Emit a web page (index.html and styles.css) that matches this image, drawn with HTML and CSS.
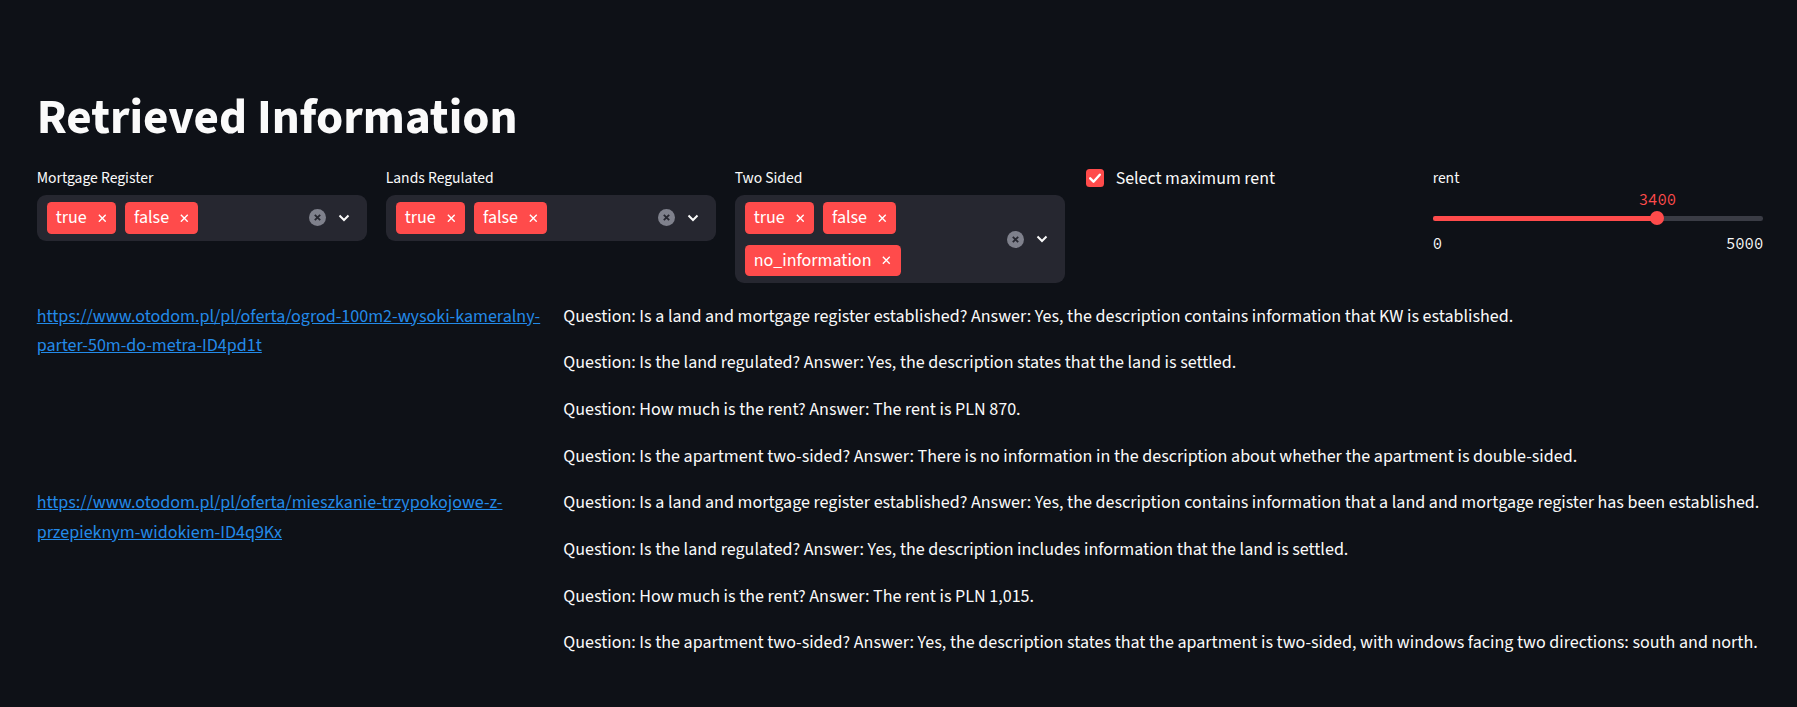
FILE: index.html
```html
<!DOCTYPE html>
<html lang="en">
<head>
<meta charset="utf-8">
<title>Retrieved Information</title>
<link rel="stylesheet" href="styles.css">
</head>
<body>
<div class="app">
  <h1 class="title">Retrieved Information</h1>

  <div class="filters">
    <div class="field">
      <label class="field-label">Mortgage Register</label>
      <div class="multiselect">
        <div class="tags">
          <span class="tag">true<svg class="tag-x" viewBox="0 0 10 10"><path d="M1 1l8 8M9 1l-8 8"/></svg></span>
          <span class="tag">false<svg class="tag-x" viewBox="0 0 10 10"><path d="M1 1l8 8M9 1l-8 8"/></svg></span>
        </div>
        <div class="ms-icons">
          <svg class="clear-icon" viewBox="0 0 24 24"><circle cx="12" cy="12" r="12"/><path d="M8.2 8.2l7.6 7.6M15.8 8.2l-7.6 7.6"/></svg>
          <svg class="chevron" viewBox="0 0 12 8"><path d="M1.5 1.5L6 6l4.5-4.5"/></svg>
        </div>
      </div>
    </div>

    <div class="field">
      <label class="field-label">Lands Regulated</label>
      <div class="multiselect">
        <div class="tags">
          <span class="tag">true<svg class="tag-x" viewBox="0 0 10 10"><path d="M1 1l8 8M9 1l-8 8"/></svg></span>
          <span class="tag">false<svg class="tag-x" viewBox="0 0 10 10"><path d="M1 1l8 8M9 1l-8 8"/></svg></span>
        </div>
        <div class="ms-icons">
          <svg class="clear-icon" viewBox="0 0 24 24"><circle cx="12" cy="12" r="12"/><path d="M8.2 8.2l7.6 7.6M15.8 8.2l-7.6 7.6"/></svg>
          <svg class="chevron" viewBox="0 0 12 8"><path d="M1.5 1.5L6 6l4.5-4.5"/></svg>
        </div>
      </div>
    </div>

    <div class="field">
      <label class="field-label">Two Sided</label>
      <div class="multiselect">
        <div class="tags">
          <span class="tag">true<svg class="tag-x" viewBox="0 0 10 10"><path d="M1 1l8 8M9 1l-8 8"/></svg></span>
          <span class="tag">false<svg class="tag-x" viewBox="0 0 10 10"><path d="M1 1l8 8M9 1l-8 8"/></svg></span>
          <span class="tag">no_information<svg class="tag-x" viewBox="0 0 10 10"><path d="M1 1l8 8M9 1l-8 8"/></svg></span>
        </div>
        <div class="ms-icons">
          <svg class="clear-icon" viewBox="0 0 24 24"><circle cx="12" cy="12" r="12"/><path d="M8.2 8.2l7.6 7.6M15.8 8.2l-7.6 7.6"/></svg>
          <svg class="chevron" viewBox="0 0 12 8"><path d="M1.5 1.5L6 6l4.5-4.5"/></svg>
        </div>
      </div>
    </div>

    <div class="field checkbox-field">
      <span class="checkbox"><svg viewBox="0 0 18 18"><path d="M4.2 9.3l3.3 3.4 6.3-7"/></svg></span>
      <span class="checkbox-label">Select maximum rent</span>
    </div>

    <div class="field">
      <label class="field-label field-label-tight">rent</label>
      <div class="slider">
        <div class="slider-top"><span class="slider-value" style="left:68%">3400</span></div>
        <div class="slider-track">
          <div class="slider-rail"><div class="slider-fill" style="width:68%"></div></div>
          <span class="slider-thumb" style="left:68%"></span>
        </div>
        <div class="slider-ticks"><span>0</span><span>5000</span></div>
      </div>
    </div>
  </div>

  <div class="results">
    <div class="result-row">
      <div class="result-link"><a href="#">https://www.otodom.pl/pl/oferta/ogrod-100m2-wysoki-kameralny-parter-50m-do-metra-ID4pd1t</a></div>
      <div class="result-qa">
        <p>Question: Is a land and mortgage register established? Answer: Yes, the description contains information that KW is established.</p>
        <p>Question: Is the land regulated? Answer: Yes, the description states that the land is settled.</p>
        <p>Question: How much is the rent? Answer: The rent is PLN 870.</p>
        <p>Question: Is the apartment two-sided? Answer: There is no information in the description about whether the apartment is double-sided.</p>
      </div>
    </div>
    <div class="result-row">
      <div class="result-link"><a href="#">https://www.otodom.pl/pl/oferta/mieszkanie-trzypokojowe-z-przepieknym-widokiem-ID4q9Kx</a></div>
      <div class="result-qa">
        <p>Question: Is a land and mortgage register established? Answer: Yes, the description contains information that a land and mortgage register has been established.</p>
        <p>Question: Is the land regulated? Answer: Yes, the description includes information that the land is settled.</p>
        <p>Question: How much is the rent? Answer: The rent is PLN 1,015.</p>
        <p>Question: Is the apartment two-sided? Answer: Yes, the description states that the apartment is two-sided, with windows facing two directions: south and north.</p>
      </div>
    </div>
  </div>
</div>
</body>
</html>
```
FILE: styles.css
```css
html, body {
  margin: 0;
  background: #0e1117;
  color: #fafafa;
  font-family: "Source Sans 3", "Source Sans Pro", "Lato", sans-serif;
}

.app {
  padding: 89px 33.7px 0 36.7px;
}

.title {
  margin: 0;
  font-size: 49.1px;
  line-height: 58.8px;
  font-weight: 700;
  color: #fafafa;
}

.filters {
  display: grid;
  grid-template-columns: repeat(5, 1fr);
  column-gap: 18.3px;
  align-items: start;
  margin-top: 17.2px;
}

.field-label {
  display: block;
  padding-top: 3px;
  margin-bottom: 6.3px;
  font-size: 15.6px;
  line-height: 21px;
  color: #fafafa;
}

.field-label-tight {
  margin-bottom: 0;
}

.multiselect {
  display: flex;
  align-items: center;
  box-sizing: border-box;
  min-height: 45.4px;
  padding: 7px 0 7px 10px;
  background: #262730;
  border-radius: 9px;
}

.tags {
  flex: 1;
  display: flex;
  flex-wrap: wrap;
  gap: 11px 9px;
}

.tag {
  display: inline-flex;
  align-items: center;
  gap: 11px;
  height: 31.4px;
  padding: 0 9.7px 0 9px;
  background: #ff4b4b;
  border-radius: 4.6px;
  color: #ffffff;
  font-size: 18px;
  line-height: 31.4px;
}

.tag-x {
  width: 8.6px;
  height: 8.6px;
  fill: none;
  stroke: #ffffff;
  stroke-width: 1.6;
}

.ms-icons {
  display: flex;
  align-items: center;
  gap: 12px;
  padding: 0 17.4px 0 8px;
}

.clear-icon {
  width: 17px;
  height: 17px;
}

.clear-icon circle {
  fill: #7f818c;
}

.clear-icon path {
  fill: none;
  stroke: #262730;
  stroke-width: 2.6;
}

.chevron {
  width: 12px;
  height: 8px;
  fill: none;
  stroke: #fafafa;
  stroke-width: 2;
}

.checkbox-field {
  display: flex;
  align-items: center;
  gap: 11.7px;
  padding-left: 2.3px;
}

.checkbox {
  display: flex;
  width: 18px;
  height: 18px;
  margin-bottom: 3px;
  background: #ff4b4b;
  border-radius: 3.5px;
}

.checkbox svg {
  width: 18px;
  height: 18px;
  fill: none;
  stroke: #ffffff;
  stroke-width: 2.4;
  stroke-linecap: round;
  stroke-linejoin: round;
}

.checkbox-label {
  font-size: 17.9px;
  line-height: 28.8px;
}

.slider-top {
  position: relative;
  height: 22.3px;
}

.slider-value {
  position: absolute;
  top: 0;
  transform: translateX(-50%);
  font-family: "Source Code Pro", "DejaVu Sans Mono", monospace;
  font-size: 15.6px;
  line-height: 22.3px;
  color: #ff4b4b;
}

.slider-track {
  position: relative;
  display: flex;
  align-items: center;
  height: 14px;
}

.slider-rail {
  flex: 1;
  height: 4.6px;
  border-radius: 2.3px;
  background: #3a3c45;
  overflow: hidden;
}

.slider-fill {
  height: 100%;
  background: #ff4b4b;
}

.slider-thumb {
  position: absolute;
  top: 0;
  width: 14px;
  height: 14px;
  border-radius: 50%;
  background: #ff4b4b;
  transform: translateX(-50%);
}

.slider-ticks {
  display: flex;
  justify-content: space-between;
  margin-top: 6.5px;
  font-family: "Source Code Pro", "DejaVu Sans Mono", monospace;
  font-size: 15.6px;
  line-height: 23px;
  color: #fafafa;
}

.results {
  display: flex;
  flex-direction: column;
  gap: 17.36px;
  margin-top: 18.7px;
}

.result-row {
  display: grid;
  grid-template-columns: 508.3px 1fr;
  column-gap: 18.3px;
}

.result-link {
  font-size: 18px;
  line-height: 29.3px;
  overflow-wrap: break-word;
}

.result-link a {
  color: #238ae8;
  text-decoration: underline;
}

.result-qa {
  display: flex;
  flex-direction: column;
  gap: 17.36px;
}

.result-qa p {
  margin: 0;
  font-size: 18px;
  line-height: 29.3px;
}
```
